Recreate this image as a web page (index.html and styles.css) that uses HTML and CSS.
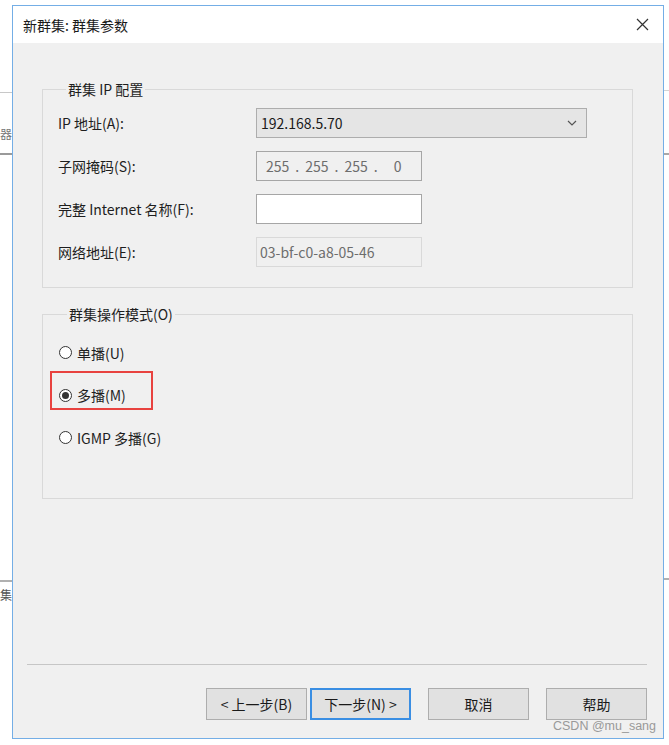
FILE: index.html
```html
<!DOCTYPE html>
<html lang="zh-CN">
<head>
<meta charset="utf-8">
<title>新群集: 群集参数</title>
<link rel="stylesheet" href="styles.css">
</head>
<body>
<div class="desk">
  <div class="bgwin bgwin-left-top"><span class="bgtext">器</span></div>
  <div class="bgwin bgwin-left-bottom"><span class="bgtext">集</span></div>
  <div class="bgwin bgwin-right-top"></div>
  <div class="bgwin bgwin-right-bottom"></div>

  <div class="dialog">
    <div class="titlebar">
      <span class="title">新群集: 群集参数</span>
      <svg class="close" width="13" height="13" viewBox="0 0 13 13"><path d="M1 1 L12 12 M12 1 L1 12" stroke="#333" stroke-width="1.2" fill="none"/></svg>
    </div>
    <div class="content">
      <fieldset class="group group-ip">
        <legend>群集 IP 配置</legend>
        <div class="form">
          <span class="label">IP 地址(A):</span>
          <div class="select"><span>192.168.5.70</span>
            <svg width="10" height="6" viewBox="0 0 10 6"><path d="M1 1 L5 5 L9 1" stroke="#555" stroke-width="1.2" fill="none"/></svg>
          </div>
          <span class="label">子网掩码(S):</span>
          <div class="field field-disabled ipmask"><span>255</span><span>.</span><span>255</span><span>.</span><span>255</span><span>.</span><span class="last">0</span></div>
          <span class="label">完整 Internet 名称(F):</span>
          <div class="field field-white"></div>
          <span class="label">网络地址(E):</span>
          <div class="field field-readonly">03-bf-c0-a8-05-46</div>
        </div>
      </fieldset>

      <fieldset class="group group-mode">
        <legend>群集操作模式(O)</legend>
        <div class="radios">
          <div class="radio"><span class="circle"></span>单播(U)</div>
          <div class="radio radio-marked"><span class="circle checked"></span>多播(M)</div>
          <div class="radio"><span class="circle"></span>IGMP 多播(G)</div>
        </div>
      </fieldset>

      <div class="footer">
        <div class="separator"></div>
        <div class="buttons">
          <div class="pair">
            <div class="btn">&lt; 上一步(B)</div>
            <div class="btn btn-default">下一步(N) &gt;</div>
          </div>
          <div class="btn">取消</div>
          <div class="btn">帮助</div>
        </div>
      </div>
    </div>
  </div>
  <div class="watermark">CSDN @mu_sang</div>
</div>
</body>
</html>
```

FILE: styles.css
```css
html, body {
  margin: 0;
  padding: 0;
  background: #ffffff;
}

.desk {
  position: relative;
  width: 669px;
  height: 745px;
  overflow: hidden;
  padding-top: 5px;
  box-sizing: border-box;
  font-family: "Noto Sans CJK SC", "Noto Sans", sans-serif;
  font-size: 14px;
  color: #1e1e1e;
}

/* background windows peeking out from behind the dialog */
.bgwin {
  position: absolute;
  width: 20px;
}
.bgwin-left-top {
  left: 0;
  top: 92px;
  height: 60px;
  border-top: 1px solid #c8c8c8;
  border-bottom: 2px solid #9a9a9a;
  width: 14px;
}
.bgwin-left-bottom {
  left: 0;
  top: 580px;
  height: 24px;
  border-top: 2px solid #b0b0b0;
  width: 14px;
}
.bgtext {
  position: absolute;
  left: 0;
  color: #555;
  font-size: 12px;
  line-height: 14px;
}
.bgwin-left-top .bgtext { top: 34px; color: #777; }
.bgwin-left-bottom .bgtext { top: 6px; }
.bgwin-right-top {
  left: 662px;
  top: 90px;
  height: 62px;
  border-top: 1px solid #d4d4d4;
  border-bottom: 2px solid #a8a8a8;
}
.bgwin-right-bottom {
  left: 662px;
  top: 578px;
  height: 10px;
  border-top: 2px solid #b0b0b0;
}

.dialog {
  position: relative;
  margin-left: 12px;
  width: 652px;
  height: 734px;
  box-sizing: border-box;
  border: 1px solid #74aee6;
  display: flex;
  flex-direction: column;
  background: #f0f0f0;
}

.titlebar {
  height: 37px;
  background: #ffffff;
  display: flex;
  align-items: center;
  justify-content: space-between;
  padding: 0 14px 0 10px;
  flex: none;
}
.title {
  font-size: 14px;
  color: #1a1a1a;
}
.close {
  display: block;
}

.content {
  flex: 1;
  display: flex;
  flex-direction: column;
}

.group {
  margin: 0 30px 0 29px;
  border: 1px solid #d9d9d9;
  min-inline-size: 0;
}
.group legend {
  margin-left: 8px;
  padding: 0 2px;
  font-size: 14px;
  line-height: 18px;
  color: #1e1e1e;
}
.group-ip {
  margin-top: 37px;
  padding: 10px 15px 20px 15px;
}
.group-mode {
  margin-top: 17px;
  padding: 19px 16px 50px 16px;
}

.form {
  display: grid;
  grid-template-columns: 198px 1fr;
  row-gap: 13px;
  align-items: center;
}
.select {
  width: 331px;
  height: 30px;
  box-sizing: border-box;
  background: #e5e5e5;
  border: 1px solid #adadad;
  display: flex;
  align-items: center;
  justify-content: space-between;
  padding: 0 9px 0 4px;
  color: #1a1a1a;
}
.field {
  width: 166px;
  height: 30px;
  box-sizing: border-box;
  display: flex;
  align-items: center;
}
.field-disabled {
  border: 1px solid #a6a6a6;
  background: #f0f0f0;
  color: #6d6d6d;
  padding-left: 9px;
  gap: 6px;
}
.ipmask .last {
  margin-left: 10px;
}
.field-white {
  border: 1px solid #a6a6a6;
  background: #ffffff;
}
.field-readonly {
  border: 1px solid #d9d9d9;
  background: #f0f0f0;
  color: #6d6d6d;
  padding-left: 3px;
}

.radios {
  display: flex;
  flex-direction: column;
  gap: 21.5px;
}
.radio {
  position: relative;
  height: 21px;
  display: flex;
  align-items: center;
  gap: 5px;
}
.circle {
  width: 13px;
  height: 13px;
  box-sizing: border-box;
  border: 1px solid #333;
  border-radius: 50%;
  background: #ffffff;
  display: flex;
  align-items: center;
  justify-content: center;
}
.circle.checked::before {
  content: "";
  width: 7px;
  height: 7px;
  border-radius: 50%;
  background: #333;
}
.radio-marked::after {
  content: "";
  position: absolute;
  left: -9px;
  top: -14px;
  width: 103px;
  height: 39px;
  box-sizing: border-box;
  border: 2px solid #e8423f;
}

.footer {
  margin-top: auto;
  padding-bottom: 18px;
}
.separator {
  height: 1px;
  background: #c6c6c6;
  margin: 0 16px 0 14px;
}
.buttons {
  display: flex;
  justify-content: flex-end;
  gap: 17px;
  margin-top: 23px;
  padding-right: 16px;
}
.pair {
  display: flex;
  gap: 3px;
}
.btn {
  width: 101px;
  height: 32px;
  box-sizing: border-box;
  background: #e1e1e1;
  border: 1px solid #adadad;
  display: flex;
  align-items: center;
  justify-content: center;
  color: #1a1a1a;
}
.btn-default {
  border: 2px solid #3a8ee3;
}

.watermark {
  position: absolute;
  left: 553px;
  top: 719px;
  font-family: "Liberation Sans", sans-serif;
  font-size: 12.5px;
  color: #999;
}
```
